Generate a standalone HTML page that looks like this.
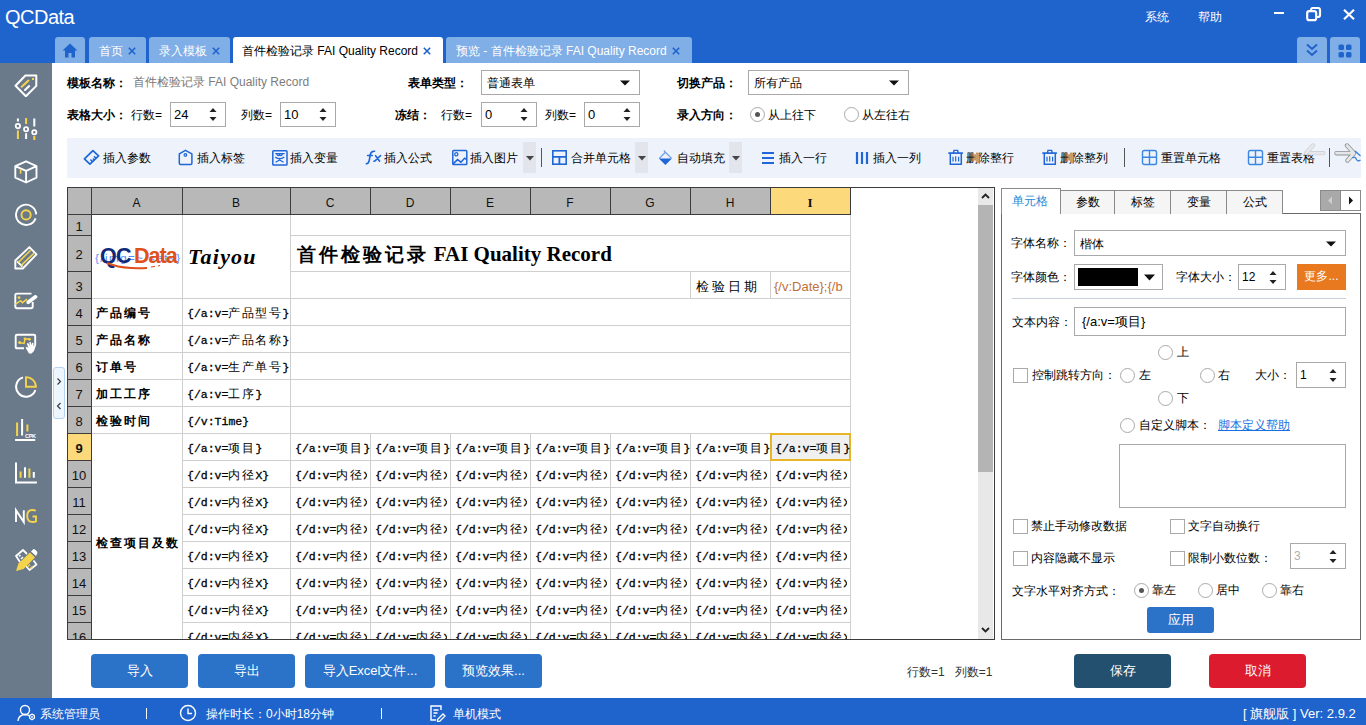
<!DOCTYPE html>
<html><head><meta charset="utf-8">
<style>
*{box-sizing:border-box;margin:0;padding:0}
html,body{width:1366px;height:725px;overflow:hidden;background:#fff;font-family:"Liberation Sans",sans-serif;font-size:12px;color:#000;position:relative}
.a{position:absolute}
.nw{white-space:nowrap}
.tab{top:37px;height:26px;background:#80aee6;border-radius:3px 3px 0 0;color:#fff;font-size:12px;line-height:28px;white-space:nowrap}
.tab.act{background:#fff;color:#000}
.lbl{font-weight:bold;font-size:12px;white-space:nowrap}
.t13{font-size:12px;white-space:nowrap}
.box{border:1px solid #a9a9a9;background:#fff}
.tb{top:138px;height:40px;line-height:40px;font-size:12px;white-space:nowrap}
.btn{color:#fff;font-size:13px;text-align:center;line-height:34px;border-radius:4px;top:654px;height:34px}
.gl{background:#d0d0d0}
.cell{font-size:11px;white-space:nowrap;overflow:hidden}
.cj{font-size:13px}
.rh{background:#b7b7b7;text-align:center;font-size:13px;color:#111}
.ch{background:#b7b7b7;text-align:center;font-size:12px;color:#111;line-height:27px}
.rp{font-size:12px;white-space:nowrap}
.chk{width:15px;height:15px;border:1px solid #a9a9a9;background:#fff}
.rad{width:15px;height:15px;border:1px solid #a9a9a9;border-radius:50%;background:#fff}
</style></head><body>

<div class="a" style="left:0;top:0;width:1366px;height:63px;background:#1f63cd"></div>
<div class="a nw" style="left:5px;top:6px;font-size:20px;color:#fff;letter-spacing:-0.5px">QCData</div>
<div class="a nw" style="left:1145px;top:9px;font-size:12px;color:#fff">系统</div>
<div class="a nw" style="left:1198px;top:9px;font-size:12px;color:#fff">帮助</div>
<div class="a" style="left:1274px;top:12px;width:10px;height:2px;background:#fff"></div>
<svg class="a" style="left:1306px;top:7px" width="16" height="15" viewBox="0 0 16 15"><rect x="1.2" y="4.2" width="9" height="9" rx="2" fill="none" stroke="#fff" stroke-width="2.2"/><path d="M5 3.5 V3 a2 2 0 0 1 2-2 h5 a2 2 0 0 1 2 2 v5 a2 2 0 0 1-2 2 h-1" fill="none" stroke="#fff" stroke-width="2.2"/></svg>
<svg class="a" style="left:1343px;top:9px" width="12" height="11" viewBox="0 0 12 11"><path d="M1 0.8 L11 10.2 M11 0.8 L1 10.2" stroke="#fff" stroke-width="2.2"/></svg>
<div class="tab a" style="left:55px;width:30px"><svg class="a" style="left:7px;top:6px" width="16" height="15" viewBox="0 0 16 15"><path d="M8 0.5 L15.5 7.5 H13 V14.5 H9.5 V10 H6.5 V14.5 H3 V7.5 H0.5 Z" fill="#1f63cd"/></svg></div>
<div class="tab a" style="left:89px;width:57px;padding-left:10px">首页<svg width="8" height="8" viewBox="0 0 8 8" style="margin-left:5px;vertical-align:0px"><path d="M0.8 0.8 L7.2 7.2 M7.2 0.8 L0.8 7.2" stroke="#1f63cd" stroke-width="1.6"/></svg></div>
<div class="tab a" style="left:149px;width:81px;padding-left:10px">录入模板<svg width="8" height="8" viewBox="0 0 8 8" style="margin-left:5px;vertical-align:0px"><path d="M0.8 0.8 L7.2 7.2 M7.2 0.8 L0.8 7.2" stroke="#1f63cd" stroke-width="1.6"/></svg></div>
<div class="tab a act" style="left:233px;width:210px;padding-left:9px;font-size:12px">首件检验记录 FAI Quality Record<svg width="8" height="8" viewBox="0 0 8 8" style="margin-left:5px;vertical-align:0px"><path d="M0.8 0.8 L7.2 7.2 M7.2 0.8 L0.8 7.2" stroke="#1f63cd" stroke-width="1.6"/></svg></div>
<div class="tab a" style="left:446px;width:246px;padding-left:10px;font-size:12px">预览 - 首件检验记录 FAI Quality Record<svg width="8" height="8" viewBox="0 0 8 8" style="margin-left:5px;vertical-align:0px"><path d="M0.8 0.8 L7.2 7.2 M7.2 0.8 L0.8 7.2" stroke="#1f63cd" stroke-width="1.6"/></svg></div>
<div class="tab a" style="left:1297px;width:30px;height:26px"><svg class="a" style="left:9px;top:6px" width="12" height="14" viewBox="0 0 12 14"><path d="M1 1.5 L6 6 L11 1.5 M1 7.5 L6 12 L11 7.5" fill="none" stroke="#1f63cd" stroke-width="2"/></svg></div>
<div class="tab a" style="left:1330px;width:30px;height:26px"><svg class="a" style="left:8px;top:7px" width="14" height="14" viewBox="0 0 14 14"><rect x="0.5" y="0.5" width="5.5" height="5.5" rx="1.5" fill="#1f63cd"/><rect x="8" y="0.5" width="5.5" height="5.5" rx="1.5" fill="#1f63cd"/><rect x="0.5" y="8" width="5.5" height="5.5" rx="1.5" fill="#1f63cd"/><rect x="8" y="8" width="5.5" height="5.5" rx="1.5" fill="#1f63cd"/></svg></div>
<div class="a" style="left:0;top:63px;width:52px;height:635px;background:#6b7a8b"></div>
<svg class="a" style="left:14px;top:73px" width="24" height="24" viewBox="0 0 24 24"><path d="M1.5 12.7 L11.4 2.5 H22.3 V12.9 L11.9 23.2 Z" stroke="#fff" stroke-width="2" fill="none" stroke-linecap="round" stroke-linejoin="round"/><path d="M7.7 13.8 L14.5 7.6" stroke="#f6d44a" stroke-width="2" fill="none" stroke-linecap="round" stroke-linejoin="round"/><path d="M11 17 L15.2 13.1" stroke="#fff" stroke-width="2" fill="none" stroke-linecap="round" stroke-linejoin="round"/><rect x="18" y="5" width="2" height="2" fill="#f6d44a"/></svg>
<svg class="a" style="left:14px;top:117px" width="24" height="24" viewBox="0 0 24 24"><path d="M3.9 1.5 V4.6 M12.1 16.2 V22 M20.3 1.5 V9.6" stroke="#fff" stroke-width="2"/><path d="M3.9 13.5 V22 M12.1 1 V7.1 M20.3 19 V23" stroke="#f6d44a" stroke-width="2"/><circle cx="3.9" cy="9.1" r="2.2" stroke="#fff" stroke-width="1.8" fill="none"/><circle cx="12.1" cy="12.2" r="2.1" stroke="#fff" stroke-width="1.8" fill="none"/><circle cx="20.3" cy="15.3" r="2.1" stroke="#fff" stroke-width="1.8" fill="none"/></svg>
<svg class="a" style="left:14px;top:160px" width="24" height="24" viewBox="0 0 24 24"><path d="M12.1 1.3 L22.5 6.1 V17.6 L12.1 22.5 L1.3 17.6 V6.1 Z M1.3 6.1 L12.1 10.8 L22.5 6.1 M12.1 10.8 V22.5" stroke="#fff" stroke-width="1.9" fill="none" stroke-linejoin="round"/><path d="M6.6 9.2 V13.7" stroke="#f6d44a" stroke-width="1.6"/></svg>
<svg class="a" style="left:14px;top:203px" width="24" height="24" viewBox="0 0 24 24"><path d="M22.2 11.4 A10.1 10.1 0 1 0 21.6 15.3" stroke="#fff" stroke-width="1.9" fill="none"/><circle cx="12.1" cy="11.9" r="4.6" stroke="#f6d44a" stroke-width="1.9" fill="none"/></svg>
<svg class="a" style="left:14px;top:246px" width="24" height="24" viewBox="0 0 24 24"><path d="M1.3 14.5 L15.4 1.1 L22.5 8.4 L8.8 22.5 H1.3 Z M3.1 15.4 L8.4 20.7" stroke="#fff" stroke-width="1.9" fill="none" stroke-linejoin="round"/><path d="M4.2 16.5 L16.7 4.2 M7.3 19.4 L19.8 7.3" stroke="#f6d44a" stroke-width="1.5"/></svg>
<svg class="a" style="left:14px;top:289px" width="24" height="24" viewBox="0 0 24 24"><path d="M17.5 4.6 H3 Q1.3 4.6 1.3 6.3 V17.5 Q1.3 19.2 3 19.2 H17 Q18.7 19.2 18.7 17.5 V13" stroke="#fff" stroke-width="1.9" fill="none"/><path d="M1.3 15.4 L6.6 11.7 L8.4 13.7 L13 10.1" stroke="#f6d44a" stroke-width="1.5" fill="none"/><circle cx="5" cy="8.6" r="1.4" fill="#f6d44a"/><path d="M14.2 13.3 L21.5 7.8" stroke="#fff" stroke-width="3.6" stroke-linecap="round"/></svg>
<svg class="a" style="left:14px;top:332px" width="24" height="24" viewBox="0 0 24 24"><path d="M10 16.3 H3 Q1.7 16.3 1.7 15 V4.1 Q1.7 2.8 3 2.8 H20 Q21.2 2.8 21.2 4.1 V13" stroke="#fff" stroke-width="1.9" fill="none"/><path d="M5.7 10.6 L10.1 11.4 L11 6.8 L15.4 7.3" stroke="#f6d44a" stroke-width="1.4" fill="none"/><circle cx="5.7" cy="10.6" r="1.5" fill="#f6d44a"/><circle cx="11" cy="6.8" r="1.4" fill="#f6d44a"/><circle cx="15.4" cy="7.3" r="1.4" fill="#f6d44a"/><path d="M15 21.5 L11.5 15.5 L13 14.8 L14.5 16 L12.8 11.5 L14.3 11 L15.8 14 L15.3 10.3 L16.8 10 L17.5 13.5 L18 10.8 L19.4 11 L19.5 14 L21 12.5 L22 13.3 L20 19 L17.5 21.5 Z" fill="#fff"/></svg>
<svg class="a" style="left:14px;top:375px" width="24" height="24" viewBox="0 0 24 24"><path d="M9 2.4 A9.9 9.9 0 1 0 21.4 15" stroke="#fff" stroke-width="2" fill="none"/><path d="M12 2.1 V11.8 H21.9 A9.8 9.8 0 0 0 12 2.1 Z" stroke="#f6d44a" stroke-width="1.9" fill="none" stroke-linejoin="miter"/></svg>
<svg class="a" style="left:14px;top:418px" width="24" height="24" viewBox="0 0 24 24"><path d="M3.1 4.6 V18 M13.4 6.6 V13.4" stroke="#f6d44a" stroke-width="2"/><path d="M8.1 1 V17.6 M1.1 22 H21.2" stroke="#fff" stroke-width="2"/><text x="11" y="19.5" font-size="5.5" fill="#fff" font-family="Liberation Sans" font-weight="bold" letter-spacing="-0.3">CPK</text></svg>
<svg class="a" style="left:14px;top:461px" width="24" height="24" viewBox="0 0 24 24"><path d="M2 1.5 V21.6 H22.9" stroke="#fff" stroke-width="2" fill="none"/><path d="M6.6 10.6 V16.7 M15.4 7.5 V16.7" stroke="#f6d44a" stroke-width="2"/><path d="M11 6.2 V16.7 M19.8 11 V16.7" stroke="#fff" stroke-width="2"/></svg>
<svg class="a" style="left:14px;top:500px" width="24" height="32" viewBox="0 0 24 32"><path d="M2 22 V10.2 L9.8 22 V10.2" stroke="#fff" stroke-width="1.9" fill="none"/><path d="M21.8 10.8 Q20.5 10 18.3 10 Q13.2 10 13.2 16 Q13.2 22 18.5 22 Q20.5 22 22 21.3 V16.5 H18.5" stroke="#f6d44a" stroke-width="1.9" fill="none"/></svg>
<svg class="a" style="left:14px;top:547px" width="24" height="24" viewBox="0 0 24 24"><path d="M6 15 L2 9 L9 3 L13 7" stroke="#fff" stroke-width="1.8" fill="none" stroke-linejoin="round"/><path d="M5 9.5 L6.5 8 M7 12 L9 10" stroke="#fff" stroke-width="1.5"/><path d="M19.5 13.5 L22.5 17.5 L15.5 23 L12 19" stroke="#fff" stroke-width="1.8" fill="none" stroke-linejoin="round"/><path d="M14 19.5 L16 17.5 M16.5 21.5 L18.5 19.5" stroke="#f6d44a" stroke-width="1.5"/><path d="M2 24 L4.5 16.5 L16 5.5 L21 10.5 L9.5 22 Z" fill="#f6d44a"/><path d="M4.5 16.5 L9.5 22" stroke="#f6d44a" stroke-width="0.8"/><path d="M17 4.5 L19 2.5 Q20 1.5 21.5 3 L23 4.5 Q24 6 23 7 L22 9 Z" fill="#fff"/></svg>
<div class="a" style="left:53px;top:367px;width:12px;height:52px;border:1px solid #b5d3f2;border-radius:3px;background:#eef6fd"></div>
<svg class="a" style="left:56px;top:377px" width="7" height="34" viewBox="0 0 7 34"><path d="M1.5 1.5 L4.5 4.5 L1.5 7.5 M4.5 26 L1.5 29 L4.5 32" stroke="#333" stroke-width="1.1" fill="none"/></svg>
<div class="a" style="left:0;top:698px;width:1366px;height:27px;background:#1f63cd"></div>
<div class="a lbl" style="left:67px;top:75px">模板名称：</div>
<div class="a t13" style="left:133px;top:74px;color:#777">首件检验记录 <span style="color:#7d7d7d">FAI Quality Record</span></div>
<div class="a lbl" style="left:67px;top:107px">表格大小：</div>
<div class="a t13" style="left:131px;top:107px">行数=</div>
<div class="a box" style="left:170px;top:102px;width:56px;height:25px"><div class="a nw" style="left:3px;top:0;line-height:23px;font-size:13px;color:#000">24</div><svg class="a" style="right:8px;top:4px" width="8" height="15" viewBox="0 0 8 15"><path d="M0.5 5 L4 1 L7.5 5 Z M0.5 10 L4 14 L7.5 10 Z" fill="#222"/></svg></div>
<div class="a t13" style="left:241px;top:107px">列数=</div>
<div class="a box" style="left:280px;top:102px;width:56px;height:25px"><div class="a nw" style="left:3px;top:0;line-height:23px;font-size:13px;color:#000">10</div><svg class="a" style="right:8px;top:4px" width="8" height="15" viewBox="0 0 8 15"><path d="M0.5 5 L4 1 L7.5 5 Z M0.5 10 L4 14 L7.5 10 Z" fill="#222"/></svg></div>
<div class="a lbl" style="left:408px;top:75px">表单类型：</div>
<div class="a box" style="left:481px;top:70px;width:159px;height:25px"><div class="a nw" style="left:5px;top:1px;line-height:23px;font-size:12px">普通表单</div><svg class="a" style="right:9px;top:9px" width="10" height="6" viewBox="0 0 10 6"><path d="M0 0.5 H10 L5 5.5 Z" fill="#111"/></svg></div>
<div class="a lbl" style="left:395px;top:107px">冻结：</div>
<div class="a t13" style="left:441px;top:107px">行数=</div>
<div class="a box" style="left:481px;top:102px;width:56px;height:25px"><div class="a nw" style="left:3px;top:0;line-height:23px;font-size:13px;color:#000">0</div><svg class="a" style="right:8px;top:4px" width="8" height="15" viewBox="0 0 8 15"><path d="M0.5 5 L4 1 L7.5 5 Z M0.5 10 L4 14 L7.5 10 Z" fill="#222"/></svg></div>
<div class="a t13" style="left:545px;top:107px">列数=</div>
<div class="a box" style="left:584px;top:102px;width:56px;height:25px"><div class="a nw" style="left:3px;top:0;line-height:23px;font-size:13px;color:#000">0</div><svg class="a" style="right:8px;top:4px" width="8" height="15" viewBox="0 0 8 15"><path d="M0.5 5 L4 1 L7.5 5 Z M0.5 10 L4 14 L7.5 10 Z" fill="#222"/></svg></div>
<div class="a lbl" style="left:677px;top:75px">切换产品：</div>
<div class="a box" style="left:748px;top:70px;width:161px;height:25px"><div class="a nw" style="left:5px;top:1px;line-height:23px;font-size:12px">所有产品</div><svg class="a" style="right:9px;top:9px" width="10" height="6" viewBox="0 0 10 6"><path d="M0 0.5 H10 L5 5.5 Z" fill="#111"/></svg></div>
<div class="a lbl" style="left:677px;top:107px">录入方向：</div>
<div class="a rad" style="left:750px;top:107px"><div class="a" style="left:4px;top:4px;width:5px;height:5px;border-radius:50%;background:#555"></div></div>
<div class="a t13" style="left:768px;top:107px">从上往下</div>
<div class="a rad" style="left:844px;top:107px"></div>
<div class="a t13" style="left:862px;top:107px">从左往右</div>
<div class="a" style="left:67px;top:138px;width:1294px;height:40px;background:#eef3fb"></div>
<svg class="a" style="left:83px;top:149px" width="17" height="17" viewBox="0 0 17 17"><path d="M9.9 1.6 L15.6 6.9 L6.9 15.2 L1.4 9.9 Z" fill="none" stroke="#1f66d8" stroke-width="1.7" stroke-linejoin="round"/><path d="M13.2 9.5 L11 7.2 M11.4 11.2 L9.9 9.6 M9.6 12.9 L7.4 10.6" stroke="#1f66d8" stroke-width="1.5"/></svg>
<div class="a tb" style="left:103px">插入参数</div>
<svg class="a" style="left:177px;top:148px" width="17" height="18" viewBox="0 0 17 18"><path d="M8.4 2.3 L14.9 5.9 V15.3 Q14.9 16.5 13.7 16.5 H3.5 Q2.3 16.5 2.3 15.3 V5.9 Z" fill="none" stroke="#1f66d8" stroke-width="1.5" stroke-linejoin="round"/><circle cx="8.4" cy="6.9" r="1.3" fill="none" stroke="#1f66d8" stroke-width="1.2"/></svg>
<div class="a tb" style="left:197px">插入标签</div>
<svg class="a" style="left:271px;top:149px" width="17" height="17" viewBox="0 0 17 17"><rect x="1.8" y="1.8" width="14.2" height="14.2" rx="0.8" fill="none" stroke="#1f66d8" stroke-width="1.5"/><path d="M4.3 4.6 H13.6 M5.8 4.8 Q6.2 6.6 7.4 6.6 Q8.6 6.6 8.6 5 Q8.6 6.6 9.8 6.6 Q11 6.6 11.4 4.8 M4.3 8 Q6 9.8 8.6 9.5 Q11.3 9.8 13.3 8 M4.6 13.2 L8.6 11 L12.6 13.2" fill="none" stroke="#1f66d8" stroke-width="1.3"/></svg>
<div class="a tb" style="left:290px">插入变量</div>
<svg class="a" style="left:364px;top:149px" width="18" height="16" viewBox="0 0 18 16"><path d="M2.3 14.8 Q4.6 15 5.3 11.2 L6.3 5.5 Q7 2 10.6 2.3" fill="none" stroke="#1f66d8" stroke-width="1.6" stroke-linecap="round"/><path d="M3.5 6.6 H8.3" stroke="#1f66d8" stroke-width="1.5" stroke-linecap="round"/><path d="M10 12.3 Q11.3 12 12.4 10.5 L16.5 6.6 M11.6 6.7 L15.6 12.2" fill="none" stroke="#1f66d8" stroke-width="1.6" stroke-linecap="round"/></svg>
<div class="a tb" style="left:384px">插入公式</div>
<svg class="a" style="left:451px;top:149px" width="17" height="17" viewBox="0 0 17 17"><rect x="1.8" y="1.6" width="14" height="14" rx="0.8" fill="none" stroke="#1f66d8" stroke-width="1.5"/><circle cx="5.3" cy="5.3" r="1.6" fill="none" stroke="#1f66d8" stroke-width="1.3"/><path d="M2 14.9 L6.6 10.6 L9.9 13.2 L13.6 9.3 L15.6 10.4" fill="none" stroke="#1f66d8" stroke-width="1.5"/></svg>
<div class="a tb" style="left:470px">插入图片</div>
<div class="a" style="left:523px;top:142px;width:13px;height:31px;background:#e2e6ec"></div><svg class="a" style="left:526px;top:156px" width="8" height="5" viewBox="0 0 8 5"><path d="M0 0 H8 L4 4.5Z" fill="#444"/></svg>
<div class="a" style="left:541px;top:148px;width:1px;height:19px;background:#555"></div>
<svg class="a" style="left:551px;top:149px" width="17" height="17" viewBox="0 0 17 17"><rect x="1.8" y="1.8" width="13.4" height="13.4" fill="none" stroke="#1f66d8" stroke-width="1.6"/><path d="M1.8 7.8 H15.2 M8.4 7.8 V15.2" stroke="#1f66d8" stroke-width="1.8"/></svg>
<div class="a tb" style="left:571px">合并单元格</div>
<div class="a" style="left:635px;top:142px;width:13px;height:31px;background:#e2e6ec"></div><svg class="a" style="left:638px;top:156px" width="8" height="5" viewBox="0 0 8 5"><path d="M0 0 H8 L4 4.5Z" fill="#444"/></svg>
<svg class="a" style="left:657px;top:148px" width="17" height="18" viewBox="0 0 17 18"><path d="M6.9 2.3 L8.4 4.3 L14.6 10.4 M8.4 4.3 L2.3 10.4" fill="none" stroke="#6fa0e6" stroke-width="1.3"/><path d="M1.9 10.4 H14.9 L8.4 16.9 Z" fill="#1f66d8"/></svg>
<div class="a tb" style="left:677px">自动填充</div>
<div class="a" style="left:729px;top:142px;width:13px;height:31px;background:#e2e6ec"></div><svg class="a" style="left:732px;top:156px" width="8" height="5" viewBox="0 0 8 5"><path d="M0 0 H8 L4 4.5Z" fill="#444"/></svg>
<svg class="a" style="left:761px;top:150px" width="14" height="16" viewBox="0 0 14 16"><path d="M1 3 H13 M1 8 H13 M1 13 H13" stroke="#1f66d8" stroke-width="2.2"/></svg>
<div class="a tb" style="left:779px">插入一行</div>
<svg class="a" style="left:855px;top:150px" width="14" height="16" viewBox="0 0 14 16"><path d="M2 2 V14 M7 2 V14 M12 2 V14" stroke="#1f66d8" stroke-width="2.2"/></svg>
<div class="a tb" style="left:873px">插入一列</div>
<svg class="a" style="left:947px;top:148px" width="17" height="18" viewBox="0 0 17 18"><path d="M1.3 5.1 H15.9" stroke="#1f66d8" stroke-width="1.7"/><path d="M6.4 5 L7 2.4 H10.6 L11.3 5" stroke="#1f66d8" stroke-width="1.4" fill="none"/><path d="M3.3 5.6 V16.3 H14.3 V5.6" stroke="#1f66d8" stroke-width="1.5" fill="none"/><path d="M6 8.8 V13.4 M8.7 8.2 V13.4 M11.6 8.8 V13.4" stroke="#1f66d8" stroke-width="1.2"/></svg>
<div class="a tb" style="left:966px">删除整行</div>
<svg class="a" style="left:1041px;top:148px" width="17" height="18" viewBox="0 0 17 18"><path d="M1.3 5.1 H15.9" stroke="#1f66d8" stroke-width="1.7"/><path d="M6.4 5 L7 2.4 H10.6 L11.3 5" stroke="#1f66d8" stroke-width="1.4" fill="none"/><path d="M3.3 5.6 V16.3 H14.3 V5.6" stroke="#1f66d8" stroke-width="1.5" fill="none"/><path d="M6 8.8 V13.4 M8.7 8.2 V13.4 M11.6 8.8 V13.4" stroke="#1f66d8" stroke-width="1.2"/></svg>
<div class="a tb" style="left:1060px">删除整列</div>
<div class="a" style="left:1124px;top:148px;width:1px;height:19px;background:#555"></div>
<svg class="a" style="left:1141px;top:149px" width="17" height="17" viewBox="0 0 17 17"><rect x="1.5" y="1.5" width="14" height="14" rx="1.8" fill="none" stroke="#3a86e0" stroke-width="1.4"/><path d="M8.5 1.5 V15.5 M1.5 8.2 H15.5" stroke="#3a86e0" stroke-width="1.4"/></svg>
<div class="a tb" style="left:1161px">重置单元格</div>
<svg class="a" style="left:1247px;top:149px" width="17" height="17" viewBox="0 0 17 17"><rect x="1.5" y="1.5" width="14" height="14" rx="1.8" fill="none" stroke="#3a86e0" stroke-width="1.4"/><path d="M8.5 1.5 V15.5 M1.5 8.2 H15.5" stroke="#3a86e0" stroke-width="1.4"/></svg>
<div class="a tb" style="left:1267px">重置表格</div>
<svg class="a" style="left:1303px;top:143px" width="24" height="18" viewBox="0 0 24 18"><path d="M20.5 10.2 H7 M10 2.5 L3 10" stroke="#cfd3d8" stroke-width="4.2" fill="none" stroke-linecap="round"/><path d="M20.5 10.2 H7 M10 2.5 L3 10" stroke="#e6e8eb" stroke-width="2.6" fill="none" stroke-linecap="round"/></svg>
<div class="a" style="left:1329px;top:148px;width:1px;height:19px;background:#555"></div>
<svg class="a" style="left:1333px;top:143px" width="28" height="22" viewBox="0 0 28 22"><path d="M3.5 10.2 H20 M14 2.5 L21 10.2 L14.5 17.5" stroke="#8e9296" stroke-width="4.4" fill="none" stroke-linecap="round" stroke-linejoin="round"/><path d="M3.5 10.2 H20 M14 2.5 L21 10.2 L14.5 17.5" stroke="#e4e6e8" stroke-width="2.8" fill="none" stroke-linecap="round" stroke-linejoin="round"/><path d="M22 8 Q25.5 11 27.5 13 M19.5 15 Q22 13 23.5 16.5 Q25 19 27.5 17" stroke="#2c7be0" stroke-width="1.2" fill="none"/></svg>
<div class="a" style="left:67px;top:187px;width:928px;height:453px;border:1px solid #3c3c3c;overflow:hidden;background:#fff">
<div class="a" style="left:-1px;top:-1px;width:783px;height:27px;background:#b8b8b8"></div>
<div class="a" style="left:702px;top:-1px;width:80px;height:27px;background:#fcd97b"></div>
<div class="a" style="left:-1px;top:26px;width:24px;height:460px;background:#b8b8b8"></div>
<div class="a" style="left:-1px;top:245px;width:24px;height:27px;background:#fcd97b"></div>
<div class="a" style="left:223px;top:47px;width:559px;height:1px;background:#cfcfcf"></div>
<div class="a" style="left:223px;top:83px;width:559px;height:1px;background:#cfcfcf"></div>
<div class="a" style="left:23px;top:110px;width:759px;height:1px;background:#cfcfcf"></div>
<div class="a" style="left:23px;top:137px;width:759px;height:1px;background:#cfcfcf"></div>
<div class="a" style="left:23px;top:164px;width:759px;height:1px;background:#cfcfcf"></div>
<div class="a" style="left:23px;top:191px;width:759px;height:1px;background:#cfcfcf"></div>
<div class="a" style="left:23px;top:218px;width:759px;height:1px;background:#cfcfcf"></div>
<div class="a" style="left:23px;top:245px;width:759px;height:1px;background:#cfcfcf"></div>
<div class="a" style="left:115px;top:272px;width:667px;height:1px;background:#cfcfcf"></div>
<div class="a" style="left:115px;top:299px;width:667px;height:1px;background:#cfcfcf"></div>
<div class="a" style="left:115px;top:326px;width:667px;height:1px;background:#cfcfcf"></div>
<div class="a" style="left:115px;top:353px;width:667px;height:1px;background:#cfcfcf"></div>
<div class="a" style="left:115px;top:380px;width:667px;height:1px;background:#cfcfcf"></div>
<div class="a" style="left:115px;top:407px;width:667px;height:1px;background:#cfcfcf"></div>
<div class="a" style="left:115px;top:434px;width:667px;height:1px;background:#cfcfcf"></div>
<div class="a" style="left:115px;top:461px;width:667px;height:1px;background:#cfcfcf"></div>
<div class="a" style="left:114px;top:26px;width:1px;height:460px;background:#cfcfcf"></div>
<div class="a" style="left:222px;top:26px;width:1px;height:460px;background:#cfcfcf"></div>
<div class="a" style="left:302px;top:245px;width:1px;height:240px;background:#cfcfcf"></div>
<div class="a" style="left:382px;top:245px;width:1px;height:240px;background:#cfcfcf"></div>
<div class="a" style="left:462px;top:245px;width:1px;height:240px;background:#cfcfcf"></div>
<div class="a" style="left:542px;top:245px;width:1px;height:240px;background:#cfcfcf"></div>
<div class="a" style="left:622px;top:245px;width:1px;height:240px;background:#cfcfcf"></div>
<div class="a" style="left:622px;top:83px;width:1px;height:27px;background:#cfcfcf"></div>
<div class="a" style="left:702px;top:83px;width:1px;height:27px;background:#cfcfcf"></div>
<div class="a" style="left:702px;top:245px;width:1px;height:240px;background:#cfcfcf"></div>
<div class="a" style="left:782px;top:26px;width:1px;height:460px;background:#cfcfcf"></div>
<div class="a" style="left:-1px;top:26px;width:784px;height:1px;background:#3c3c3c"></div>
<div class="a" style="left:23px;top:-1px;width:1px;height:27px;background:#3c3c3c"></div>
<div class="a" style="left:114px;top:-1px;width:1px;height:27px;background:#3c3c3c"></div>
<div class="a" style="left:222px;top:-1px;width:1px;height:27px;background:#3c3c3c"></div>
<div class="a" style="left:302px;top:-1px;width:1px;height:27px;background:#3c3c3c"></div>
<div class="a" style="left:382px;top:-1px;width:1px;height:27px;background:#3c3c3c"></div>
<div class="a" style="left:462px;top:-1px;width:1px;height:27px;background:#3c3c3c"></div>
<div class="a" style="left:542px;top:-1px;width:1px;height:27px;background:#3c3c3c"></div>
<div class="a" style="left:622px;top:-1px;width:1px;height:27px;background:#3c3c3c"></div>
<div class="a" style="left:702px;top:-1px;width:1px;height:27px;background:#3c3c3c"></div>
<div class="a" style="left:782px;top:-1px;width:1px;height:27px;background:#3c3c3c"></div>
<div class="a" style="left:23px;top:26px;width:1px;height:460px;background:#3c3c3c"></div>
<div class="a" style="left:-1px;top:26px;width:24px;height:1px;background:#3c3c3c"></div>
<div class="a" style="left:-1px;top:47px;width:24px;height:1px;background:#3c3c3c"></div>
<div class="a" style="left:-1px;top:83px;width:24px;height:1px;background:#3c3c3c"></div>
<div class="a" style="left:-1px;top:110px;width:24px;height:1px;background:#3c3c3c"></div>
<div class="a" style="left:-1px;top:137px;width:24px;height:1px;background:#3c3c3c"></div>
<div class="a" style="left:-1px;top:164px;width:24px;height:1px;background:#3c3c3c"></div>
<div class="a" style="left:-1px;top:191px;width:24px;height:1px;background:#3c3c3c"></div>
<div class="a" style="left:-1px;top:218px;width:24px;height:1px;background:#3c3c3c"></div>
<div class="a" style="left:-1px;top:245px;width:24px;height:1px;background:#3c3c3c"></div>
<div class="a" style="left:-1px;top:272px;width:24px;height:1px;background:#3c3c3c"></div>
<div class="a" style="left:-1px;top:299px;width:24px;height:1px;background:#3c3c3c"></div>
<div class="a" style="left:-1px;top:326px;width:24px;height:1px;background:#3c3c3c"></div>
<div class="a" style="left:-1px;top:353px;width:24px;height:1px;background:#3c3c3c"></div>
<div class="a" style="left:-1px;top:380px;width:24px;height:1px;background:#3c3c3c"></div>
<div class="a" style="left:-1px;top:407px;width:24px;height:1px;background:#3c3c3c"></div>
<div class="a" style="left:-1px;top:434px;width:24px;height:1px;background:#3c3c3c"></div>
<div class="a" style="left:-1px;top:461px;width:24px;height:1px;background:#3c3c3c"></div>
<div class="a" style="left:23px;top:2px;width:91px;height:27px;line-height:27px;text-align:center;font-size:12px;font-weight:normal;color:#111">A</div>
<div class="a" style="left:114px;top:2px;width:108px;height:27px;line-height:27px;text-align:center;font-size:12px;font-weight:normal;color:#111">B</div>
<div class="a" style="left:222px;top:2px;width:80px;height:27px;line-height:27px;text-align:center;font-size:12px;font-weight:normal;color:#111">C</div>
<div class="a" style="left:302px;top:2px;width:80px;height:27px;line-height:27px;text-align:center;font-size:12px;font-weight:normal;color:#111">D</div>
<div class="a" style="left:382px;top:2px;width:80px;height:27px;line-height:27px;text-align:center;font-size:12px;font-weight:normal;color:#111">E</div>
<div class="a" style="left:462px;top:2px;width:80px;height:27px;line-height:27px;text-align:center;font-size:12px;font-weight:normal;color:#111">F</div>
<div class="a" style="left:542px;top:2px;width:80px;height:27px;line-height:27px;text-align:center;font-size:12px;font-weight:normal;color:#111">G</div>
<div class="a" style="left:622px;top:2px;width:80px;height:27px;line-height:27px;text-align:center;font-size:12px;font-weight:normal;color:#111">H</div>
<div class="a" style="left:702px;top:2px;width:80px;height:27px;line-height:27px;text-align:center;font-size:12px;font-weight:bold;font-family:Liberation Serif;font-size:13px;margin-top:-1px;color:#111">I</div>
<div class="a" style="left:-1px;top:28px;width:24px;height:21px;line-height:21px;text-align:center;font-size:13px;font-weight:normal;color:#111">1</div>
<div class="a" style="left:-1px;top:49px;width:24px;height:36px;line-height:36px;text-align:center;font-size:13px;font-weight:normal;color:#111">2</div>
<div class="a" style="left:-1px;top:85px;width:24px;height:27px;line-height:27px;text-align:center;font-size:13px;font-weight:normal;color:#111">3</div>
<div class="a" style="left:-1px;top:112px;width:24px;height:27px;line-height:27px;text-align:center;font-size:13px;font-weight:normal;color:#111">4</div>
<div class="a" style="left:-1px;top:139px;width:24px;height:27px;line-height:27px;text-align:center;font-size:13px;font-weight:normal;color:#111">5</div>
<div class="a" style="left:-1px;top:166px;width:24px;height:27px;line-height:27px;text-align:center;font-size:13px;font-weight:normal;color:#111">6</div>
<div class="a" style="left:-1px;top:193px;width:24px;height:27px;line-height:27px;text-align:center;font-size:13px;font-weight:normal;color:#111">7</div>
<div class="a" style="left:-1px;top:220px;width:24px;height:27px;line-height:27px;text-align:center;font-size:13px;font-weight:normal;color:#111">8</div>
<div class="a" style="left:-1px;top:247px;width:24px;height:27px;line-height:27px;text-align:center;font-size:13px;font-weight:bold;color:#111">9</div>
<div class="a" style="left:-1px;top:274px;width:24px;height:27px;line-height:27px;text-align:center;font-size:13px;font-weight:normal;color:#111">10</div>
<div class="a" style="left:-1px;top:301px;width:24px;height:27px;line-height:27px;text-align:center;font-size:13px;font-weight:normal;color:#111">11</div>
<div class="a" style="left:-1px;top:328px;width:24px;height:27px;line-height:27px;text-align:center;font-size:13px;font-weight:normal;color:#111">12</div>
<div class="a" style="left:-1px;top:355px;width:24px;height:27px;line-height:27px;text-align:center;font-size:13px;font-weight:normal;color:#111">13</div>
<div class="a" style="left:-1px;top:382px;width:24px;height:27px;line-height:27px;text-align:center;font-size:13px;font-weight:normal;color:#111">14</div>
<div class="a" style="left:-1px;top:409px;width:24px;height:27px;line-height:27px;text-align:center;font-size:13px;font-weight:normal;color:#111">15</div>
<div class="a" style="left:-1px;top:436px;width:24px;height:27px;line-height:27px;text-align:center;font-size:13px;font-weight:normal;color:#111">16</div>
<div class="a" style="left:702px;top:245px;width:81px;height:28px;border:2px solid #e8b526;background:#f0f0f0"></div>
<svg class="a" style="left:27px;top:54px" width="86" height="30" viewBox="0 0 86 30">
<text x="0" y="19.5" font-family="Liberation Sans" font-size="11.5" fill="#3d7af5" opacity="0.85" textLength="85" lengthAdjust="spacing">{/img=~/sets}</text>
<text x="5" y="20.5" font-family="Liberation Sans" font-weight="bold" font-size="21.5" fill="#0f2878" letter-spacing="-0.8">QC</text>
<text x="39" y="20.5" font-family="Liberation Sans" font-weight="bold" font-size="21.5" fill="#e0501a" letter-spacing="-1">Data</text>
<path d="M12 21 L18 23 Q30 27 52 26" stroke="#e0501a" stroke-width="2" fill="none"/><path d="M56 25 L60 24.5 M63 24 L65 23.5" stroke="#e0501a" stroke-width="1.2"/>
</svg>
<div class="a nw" style="left:120px;top:55px;font-family:Liberation Serif;font-style:italic;font-weight:bold;font-size:22px;line-height:28px;letter-spacing:1.2px">Taiyou</div>
<div class="a nw" style="left:229px;top:54px;font-family:Liberation Serif;font-weight:bold;font-size:19px;line-height:25px"><span style="letter-spacing:3px">首件检验记录</span> <span style="font-size:21px">FAI Quality Record</span></div>
<div class="a nw" style="left:628px;top:90px;font-size:13px;line-height:18px;letter-spacing:3px">检验日期</div>
<div class="a nw" style="left:706px;top:90px;width:76px;overflow:hidden;font-size:13px;line-height:18px;color:#c0703a">{/v:Date};{/b</div>
<div class="a nw" style="left:28px;top:112px;line-height:27px;font-size:12px;font-weight:bold;letter-spacing:2px">产品编号</div>
<div class="a nw" style="left:119px;top:112px;height:27px;line-height:27px;font-family:Liberation Mono;font-size:11.5px;-webkit-text-stroke:0.3px #000;font-weight:normal">{/a:v=<span style="font-size:12px;letter-spacing:1.5px;-webkit-text-stroke:0">产</span><span style="font-size:12px;letter-spacing:1.5px;-webkit-text-stroke:0">品</span><span style="font-size:12px;letter-spacing:1.5px;-webkit-text-stroke:0">型</span><span style="font-size:12px;letter-spacing:1.5px;-webkit-text-stroke:0">号</span>}</div>
<div class="a nw" style="left:28px;top:139px;line-height:27px;font-size:12px;font-weight:bold;letter-spacing:2px">产品名称</div>
<div class="a nw" style="left:119px;top:139px;height:27px;line-height:27px;font-family:Liberation Mono;font-size:11.5px;-webkit-text-stroke:0.3px #000;font-weight:normal">{/a:v=<span style="font-size:12px;letter-spacing:1.5px;-webkit-text-stroke:0">产</span><span style="font-size:12px;letter-spacing:1.5px;-webkit-text-stroke:0">品</span><span style="font-size:12px;letter-spacing:1.5px;-webkit-text-stroke:0">名</span><span style="font-size:12px;letter-spacing:1.5px;-webkit-text-stroke:0">称</span>}</div>
<div class="a nw" style="left:28px;top:166px;line-height:27px;font-size:12px;font-weight:bold;letter-spacing:2px">订单号</div>
<div class="a nw" style="left:119px;top:166px;height:27px;line-height:27px;font-family:Liberation Mono;font-size:11.5px;-webkit-text-stroke:0.3px #000;font-weight:normal">{/a:v=<span style="font-size:12px;letter-spacing:1.5px;-webkit-text-stroke:0">生</span><span style="font-size:12px;letter-spacing:1.5px;-webkit-text-stroke:0">产</span><span style="font-size:12px;letter-spacing:1.5px;-webkit-text-stroke:0">单</span><span style="font-size:12px;letter-spacing:1.5px;-webkit-text-stroke:0">号</span>}</div>
<div class="a nw" style="left:28px;top:193px;line-height:27px;font-size:12px;font-weight:bold;letter-spacing:2px">加工工序</div>
<div class="a nw" style="left:119px;top:193px;height:27px;line-height:27px;font-family:Liberation Mono;font-size:11.5px;-webkit-text-stroke:0.3px #000;font-weight:normal">{/a:v=<span style="font-size:12px;letter-spacing:1.5px;-webkit-text-stroke:0">工</span><span style="font-size:12px;letter-spacing:1.5px;-webkit-text-stroke:0">序</span>}</div>
<div class="a nw" style="left:28px;top:220px;line-height:27px;font-size:12px;font-weight:bold;letter-spacing:2px">检验时间</div>
<div class="a nw" style="left:119px;top:220px;height:27px;line-height:27px;font-family:Liberation Mono;font-size:11.5px;-webkit-text-stroke:0.3px #000;font-weight:normal">{/v:Time}</div>
<div class="a nw" style="left:28px;top:342px;line-height:27px;font-size:12px;font-weight:bold;letter-spacing:2px">检查项目及数</div>
<div class="a nw" style="left:119px;top:247px;height:27px;line-height:27px;font-family:Liberation Mono;font-size:11.5px;-webkit-text-stroke:0.3px #000;font-weight:normal">{/a:v=<span style="font-size:12px;letter-spacing:1.5px;-webkit-text-stroke:0">项</span><span style="font-size:12px;letter-spacing:1.5px;-webkit-text-stroke:0">目</span>}</div>
<div class="a nw" style="left:227px;top:247px;width:75px;overflow:hidden;height:25px;line-height:27px;font-family:Liberation Mono;font-size:11.5px;-webkit-text-stroke:0.3px #000">{/a:v=<span style="font-size:12px;letter-spacing:1.5px;-webkit-text-stroke:0">项</span><span style="font-size:12px;letter-spacing:1.5px;-webkit-text-stroke:0">目</span>}</div>
<div class="a nw" style="left:307px;top:247px;width:75px;overflow:hidden;height:25px;line-height:27px;font-family:Liberation Mono;font-size:11.5px;-webkit-text-stroke:0.3px #000">{/a:v=<span style="font-size:12px;letter-spacing:1.5px;-webkit-text-stroke:0">项</span><span style="font-size:12px;letter-spacing:1.5px;-webkit-text-stroke:0">目</span>}</div>
<div class="a nw" style="left:387px;top:247px;width:75px;overflow:hidden;height:25px;line-height:27px;font-family:Liberation Mono;font-size:11.5px;-webkit-text-stroke:0.3px #000">{/a:v=<span style="font-size:12px;letter-spacing:1.5px;-webkit-text-stroke:0">项</span><span style="font-size:12px;letter-spacing:1.5px;-webkit-text-stroke:0">目</span>}</div>
<div class="a nw" style="left:467px;top:247px;width:75px;overflow:hidden;height:25px;line-height:27px;font-family:Liberation Mono;font-size:11.5px;-webkit-text-stroke:0.3px #000">{/a:v=<span style="font-size:12px;letter-spacing:1.5px;-webkit-text-stroke:0">项</span><span style="font-size:12px;letter-spacing:1.5px;-webkit-text-stroke:0">目</span>}</div>
<div class="a nw" style="left:547px;top:247px;width:75px;overflow:hidden;height:25px;line-height:27px;font-family:Liberation Mono;font-size:11.5px;-webkit-text-stroke:0.3px #000">{/a:v=<span style="font-size:12px;letter-spacing:1.5px;-webkit-text-stroke:0">项</span><span style="font-size:12px;letter-spacing:1.5px;-webkit-text-stroke:0">目</span>}</div>
<div class="a nw" style="left:627px;top:247px;width:75px;overflow:hidden;height:25px;line-height:27px;font-family:Liberation Mono;font-size:11.5px;-webkit-text-stroke:0.3px #000">{/a:v=<span style="font-size:12px;letter-spacing:1.5px;-webkit-text-stroke:0">项</span><span style="font-size:12px;letter-spacing:1.5px;-webkit-text-stroke:0">目</span>}</div>
<div class="a nw" style="left:707px;top:247px;width:75px;overflow:hidden;height:25px;line-height:27px;font-family:Liberation Mono;font-size:11.5px;-webkit-text-stroke:0.3px #000">{/a:v=<span style="font-size:12px;letter-spacing:1.5px;-webkit-text-stroke:0">项</span><span style="font-size:12px;letter-spacing:1.5px;-webkit-text-stroke:0">目</span>}</div>
<div class="a nw" style="left:119px;top:274px;height:27px;line-height:27px;font-family:Liberation Mono;font-size:11.5px;-webkit-text-stroke:0.3px #000;font-weight:normal">{/d:v=<span style="font-size:12px;letter-spacing:1.5px;-webkit-text-stroke:0">内</span><span style="font-size:12px;letter-spacing:1.5px;-webkit-text-stroke:0">径</span>X}</div>
<div class="a nw" style="left:227px;top:274px;width:72px;overflow:hidden;height:25px;line-height:27px;font-family:Liberation Mono;font-size:11.5px;-webkit-text-stroke:0.3px #000">{/d:v=<span style="font-size:12px;letter-spacing:1.5px;-webkit-text-stroke:0">内</span><span style="font-size:12px;letter-spacing:1.5px;-webkit-text-stroke:0">径</span>X}</div>
<div class="a nw" style="left:307px;top:274px;width:72px;overflow:hidden;height:25px;line-height:27px;font-family:Liberation Mono;font-size:11.5px;-webkit-text-stroke:0.3px #000">{/d:v=<span style="font-size:12px;letter-spacing:1.5px;-webkit-text-stroke:0">内</span><span style="font-size:12px;letter-spacing:1.5px;-webkit-text-stroke:0">径</span>X}</div>
<div class="a nw" style="left:387px;top:274px;width:72px;overflow:hidden;height:25px;line-height:27px;font-family:Liberation Mono;font-size:11.5px;-webkit-text-stroke:0.3px #000">{/d:v=<span style="font-size:12px;letter-spacing:1.5px;-webkit-text-stroke:0">内</span><span style="font-size:12px;letter-spacing:1.5px;-webkit-text-stroke:0">径</span>X}</div>
<div class="a nw" style="left:467px;top:274px;width:72px;overflow:hidden;height:25px;line-height:27px;font-family:Liberation Mono;font-size:11.5px;-webkit-text-stroke:0.3px #000">{/d:v=<span style="font-size:12px;letter-spacing:1.5px;-webkit-text-stroke:0">内</span><span style="font-size:12px;letter-spacing:1.5px;-webkit-text-stroke:0">径</span>X}</div>
<div class="a nw" style="left:547px;top:274px;width:72px;overflow:hidden;height:25px;line-height:27px;font-family:Liberation Mono;font-size:11.5px;-webkit-text-stroke:0.3px #000">{/d:v=<span style="font-size:12px;letter-spacing:1.5px;-webkit-text-stroke:0">内</span><span style="font-size:12px;letter-spacing:1.5px;-webkit-text-stroke:0">径</span>X}</div>
<div class="a nw" style="left:627px;top:274px;width:72px;overflow:hidden;height:25px;line-height:27px;font-family:Liberation Mono;font-size:11.5px;-webkit-text-stroke:0.3px #000">{/d:v=<span style="font-size:12px;letter-spacing:1.5px;-webkit-text-stroke:0">内</span><span style="font-size:12px;letter-spacing:1.5px;-webkit-text-stroke:0">径</span>X}</div>
<div class="a nw" style="left:707px;top:274px;width:72px;overflow:hidden;height:25px;line-height:27px;font-family:Liberation Mono;font-size:11.5px;-webkit-text-stroke:0.3px #000">{/d:v=<span style="font-size:12px;letter-spacing:1.5px;-webkit-text-stroke:0">内</span><span style="font-size:12px;letter-spacing:1.5px;-webkit-text-stroke:0">径</span>X}</div>
<div class="a nw" style="left:119px;top:301px;height:27px;line-height:27px;font-family:Liberation Mono;font-size:11.5px;-webkit-text-stroke:0.3px #000;font-weight:normal">{/d:v=<span style="font-size:12px;letter-spacing:1.5px;-webkit-text-stroke:0">内</span><span style="font-size:12px;letter-spacing:1.5px;-webkit-text-stroke:0">径</span>X}</div>
<div class="a nw" style="left:227px;top:301px;width:72px;overflow:hidden;height:25px;line-height:27px;font-family:Liberation Mono;font-size:11.5px;-webkit-text-stroke:0.3px #000">{/d:v=<span style="font-size:12px;letter-spacing:1.5px;-webkit-text-stroke:0">内</span><span style="font-size:12px;letter-spacing:1.5px;-webkit-text-stroke:0">径</span>X}</div>
<div class="a nw" style="left:307px;top:301px;width:72px;overflow:hidden;height:25px;line-height:27px;font-family:Liberation Mono;font-size:11.5px;-webkit-text-stroke:0.3px #000">{/d:v=<span style="font-size:12px;letter-spacing:1.5px;-webkit-text-stroke:0">内</span><span style="font-size:12px;letter-spacing:1.5px;-webkit-text-stroke:0">径</span>X}</div>
<div class="a nw" style="left:387px;top:301px;width:72px;overflow:hidden;height:25px;line-height:27px;font-family:Liberation Mono;font-size:11.5px;-webkit-text-stroke:0.3px #000">{/d:v=<span style="font-size:12px;letter-spacing:1.5px;-webkit-text-stroke:0">内</span><span style="font-size:12px;letter-spacing:1.5px;-webkit-text-stroke:0">径</span>X}</div>
<div class="a nw" style="left:467px;top:301px;width:72px;overflow:hidden;height:25px;line-height:27px;font-family:Liberation Mono;font-size:11.5px;-webkit-text-stroke:0.3px #000">{/d:v=<span style="font-size:12px;letter-spacing:1.5px;-webkit-text-stroke:0">内</span><span style="font-size:12px;letter-spacing:1.5px;-webkit-text-stroke:0">径</span>X}</div>
<div class="a nw" style="left:547px;top:301px;width:72px;overflow:hidden;height:25px;line-height:27px;font-family:Liberation Mono;font-size:11.5px;-webkit-text-stroke:0.3px #000">{/d:v=<span style="font-size:12px;letter-spacing:1.5px;-webkit-text-stroke:0">内</span><span style="font-size:12px;letter-spacing:1.5px;-webkit-text-stroke:0">径</span>X}</div>
<div class="a nw" style="left:627px;top:301px;width:72px;overflow:hidden;height:25px;line-height:27px;font-family:Liberation Mono;font-size:11.5px;-webkit-text-stroke:0.3px #000">{/d:v=<span style="font-size:12px;letter-spacing:1.5px;-webkit-text-stroke:0">内</span><span style="font-size:12px;letter-spacing:1.5px;-webkit-text-stroke:0">径</span>X}</div>
<div class="a nw" style="left:707px;top:301px;width:72px;overflow:hidden;height:25px;line-height:27px;font-family:Liberation Mono;font-size:11.5px;-webkit-text-stroke:0.3px #000">{/d:v=<span style="font-size:12px;letter-spacing:1.5px;-webkit-text-stroke:0">内</span><span style="font-size:12px;letter-spacing:1.5px;-webkit-text-stroke:0">径</span>X}</div>
<div class="a nw" style="left:119px;top:328px;height:27px;line-height:27px;font-family:Liberation Mono;font-size:11.5px;-webkit-text-stroke:0.3px #000;font-weight:normal">{/d:v=<span style="font-size:12px;letter-spacing:1.5px;-webkit-text-stroke:0">内</span><span style="font-size:12px;letter-spacing:1.5px;-webkit-text-stroke:0">径</span>X}</div>
<div class="a nw" style="left:227px;top:328px;width:72px;overflow:hidden;height:25px;line-height:27px;font-family:Liberation Mono;font-size:11.5px;-webkit-text-stroke:0.3px #000">{/d:v=<span style="font-size:12px;letter-spacing:1.5px;-webkit-text-stroke:0">内</span><span style="font-size:12px;letter-spacing:1.5px;-webkit-text-stroke:0">径</span>X}</div>
<div class="a nw" style="left:307px;top:328px;width:72px;overflow:hidden;height:25px;line-height:27px;font-family:Liberation Mono;font-size:11.5px;-webkit-text-stroke:0.3px #000">{/d:v=<span style="font-size:12px;letter-spacing:1.5px;-webkit-text-stroke:0">内</span><span style="font-size:12px;letter-spacing:1.5px;-webkit-text-stroke:0">径</span>X}</div>
<div class="a nw" style="left:387px;top:328px;width:72px;overflow:hidden;height:25px;line-height:27px;font-family:Liberation Mono;font-size:11.5px;-webkit-text-stroke:0.3px #000">{/d:v=<span style="font-size:12px;letter-spacing:1.5px;-webkit-text-stroke:0">内</span><span style="font-size:12px;letter-spacing:1.5px;-webkit-text-stroke:0">径</span>X}</div>
<div class="a nw" style="left:467px;top:328px;width:72px;overflow:hidden;height:25px;line-height:27px;font-family:Liberation Mono;font-size:11.5px;-webkit-text-stroke:0.3px #000">{/d:v=<span style="font-size:12px;letter-spacing:1.5px;-webkit-text-stroke:0">内</span><span style="font-size:12px;letter-spacing:1.5px;-webkit-text-stroke:0">径</span>X}</div>
<div class="a nw" style="left:547px;top:328px;width:72px;overflow:hidden;height:25px;line-height:27px;font-family:Liberation Mono;font-size:11.5px;-webkit-text-stroke:0.3px #000">{/d:v=<span style="font-size:12px;letter-spacing:1.5px;-webkit-text-stroke:0">内</span><span style="font-size:12px;letter-spacing:1.5px;-webkit-text-stroke:0">径</span>X}</div>
<div class="a nw" style="left:627px;top:328px;width:72px;overflow:hidden;height:25px;line-height:27px;font-family:Liberation Mono;font-size:11.5px;-webkit-text-stroke:0.3px #000">{/d:v=<span style="font-size:12px;letter-spacing:1.5px;-webkit-text-stroke:0">内</span><span style="font-size:12px;letter-spacing:1.5px;-webkit-text-stroke:0">径</span>X}</div>
<div class="a nw" style="left:707px;top:328px;width:72px;overflow:hidden;height:25px;line-height:27px;font-family:Liberation Mono;font-size:11.5px;-webkit-text-stroke:0.3px #000">{/d:v=<span style="font-size:12px;letter-spacing:1.5px;-webkit-text-stroke:0">内</span><span style="font-size:12px;letter-spacing:1.5px;-webkit-text-stroke:0">径</span>X}</div>
<div class="a nw" style="left:119px;top:355px;height:27px;line-height:27px;font-family:Liberation Mono;font-size:11.5px;-webkit-text-stroke:0.3px #000;font-weight:normal">{/d:v=<span style="font-size:12px;letter-spacing:1.5px;-webkit-text-stroke:0">内</span><span style="font-size:12px;letter-spacing:1.5px;-webkit-text-stroke:0">径</span>X}</div>
<div class="a nw" style="left:227px;top:355px;width:72px;overflow:hidden;height:25px;line-height:27px;font-family:Liberation Mono;font-size:11.5px;-webkit-text-stroke:0.3px #000">{/d:v=<span style="font-size:12px;letter-spacing:1.5px;-webkit-text-stroke:0">内</span><span style="font-size:12px;letter-spacing:1.5px;-webkit-text-stroke:0">径</span>X}</div>
<div class="a nw" style="left:307px;top:355px;width:72px;overflow:hidden;height:25px;line-height:27px;font-family:Liberation Mono;font-size:11.5px;-webkit-text-stroke:0.3px #000">{/d:v=<span style="font-size:12px;letter-spacing:1.5px;-webkit-text-stroke:0">内</span><span style="font-size:12px;letter-spacing:1.5px;-webkit-text-stroke:0">径</span>X}</div>
<div class="a nw" style="left:387px;top:355px;width:72px;overflow:hidden;height:25px;line-height:27px;font-family:Liberation Mono;font-size:11.5px;-webkit-text-stroke:0.3px #000">{/d:v=<span style="font-size:12px;letter-spacing:1.5px;-webkit-text-stroke:0">内</span><span style="font-size:12px;letter-spacing:1.5px;-webkit-text-stroke:0">径</span>X}</div>
<div class="a nw" style="left:467px;top:355px;width:72px;overflow:hidden;height:25px;line-height:27px;font-family:Liberation Mono;font-size:11.5px;-webkit-text-stroke:0.3px #000">{/d:v=<span style="font-size:12px;letter-spacing:1.5px;-webkit-text-stroke:0">内</span><span style="font-size:12px;letter-spacing:1.5px;-webkit-text-stroke:0">径</span>X}</div>
<div class="a nw" style="left:547px;top:355px;width:72px;overflow:hidden;height:25px;line-height:27px;font-family:Liberation Mono;font-size:11.5px;-webkit-text-stroke:0.3px #000">{/d:v=<span style="font-size:12px;letter-spacing:1.5px;-webkit-text-stroke:0">内</span><span style="font-size:12px;letter-spacing:1.5px;-webkit-text-stroke:0">径</span>X}</div>
<div class="a nw" style="left:627px;top:355px;width:72px;overflow:hidden;height:25px;line-height:27px;font-family:Liberation Mono;font-size:11.5px;-webkit-text-stroke:0.3px #000">{/d:v=<span style="font-size:12px;letter-spacing:1.5px;-webkit-text-stroke:0">内</span><span style="font-size:12px;letter-spacing:1.5px;-webkit-text-stroke:0">径</span>X}</div>
<div class="a nw" style="left:707px;top:355px;width:72px;overflow:hidden;height:25px;line-height:27px;font-family:Liberation Mono;font-size:11.5px;-webkit-text-stroke:0.3px #000">{/d:v=<span style="font-size:12px;letter-spacing:1.5px;-webkit-text-stroke:0">内</span><span style="font-size:12px;letter-spacing:1.5px;-webkit-text-stroke:0">径</span>X}</div>
<div class="a nw" style="left:119px;top:382px;height:27px;line-height:27px;font-family:Liberation Mono;font-size:11.5px;-webkit-text-stroke:0.3px #000;font-weight:normal">{/d:v=<span style="font-size:12px;letter-spacing:1.5px;-webkit-text-stroke:0">内</span><span style="font-size:12px;letter-spacing:1.5px;-webkit-text-stroke:0">径</span>X}</div>
<div class="a nw" style="left:227px;top:382px;width:72px;overflow:hidden;height:25px;line-height:27px;font-family:Liberation Mono;font-size:11.5px;-webkit-text-stroke:0.3px #000">{/d:v=<span style="font-size:12px;letter-spacing:1.5px;-webkit-text-stroke:0">内</span><span style="font-size:12px;letter-spacing:1.5px;-webkit-text-stroke:0">径</span>X}</div>
<div class="a nw" style="left:307px;top:382px;width:72px;overflow:hidden;height:25px;line-height:27px;font-family:Liberation Mono;font-size:11.5px;-webkit-text-stroke:0.3px #000">{/d:v=<span style="font-size:12px;letter-spacing:1.5px;-webkit-text-stroke:0">内</span><span style="font-size:12px;letter-spacing:1.5px;-webkit-text-stroke:0">径</span>X}</div>
<div class="a nw" style="left:387px;top:382px;width:72px;overflow:hidden;height:25px;line-height:27px;font-family:Liberation Mono;font-size:11.5px;-webkit-text-stroke:0.3px #000">{/d:v=<span style="font-size:12px;letter-spacing:1.5px;-webkit-text-stroke:0">内</span><span style="font-size:12px;letter-spacing:1.5px;-webkit-text-stroke:0">径</span>X}</div>
<div class="a nw" style="left:467px;top:382px;width:72px;overflow:hidden;height:25px;line-height:27px;font-family:Liberation Mono;font-size:11.5px;-webkit-text-stroke:0.3px #000">{/d:v=<span style="font-size:12px;letter-spacing:1.5px;-webkit-text-stroke:0">内</span><span style="font-size:12px;letter-spacing:1.5px;-webkit-text-stroke:0">径</span>X}</div>
<div class="a nw" style="left:547px;top:382px;width:72px;overflow:hidden;height:25px;line-height:27px;font-family:Liberation Mono;font-size:11.5px;-webkit-text-stroke:0.3px #000">{/d:v=<span style="font-size:12px;letter-spacing:1.5px;-webkit-text-stroke:0">内</span><span style="font-size:12px;letter-spacing:1.5px;-webkit-text-stroke:0">径</span>X}</div>
<div class="a nw" style="left:627px;top:382px;width:72px;overflow:hidden;height:25px;line-height:27px;font-family:Liberation Mono;font-size:11.5px;-webkit-text-stroke:0.3px #000">{/d:v=<span style="font-size:12px;letter-spacing:1.5px;-webkit-text-stroke:0">内</span><span style="font-size:12px;letter-spacing:1.5px;-webkit-text-stroke:0">径</span>X}</div>
<div class="a nw" style="left:707px;top:382px;width:72px;overflow:hidden;height:25px;line-height:27px;font-family:Liberation Mono;font-size:11.5px;-webkit-text-stroke:0.3px #000">{/d:v=<span style="font-size:12px;letter-spacing:1.5px;-webkit-text-stroke:0">内</span><span style="font-size:12px;letter-spacing:1.5px;-webkit-text-stroke:0">径</span>X}</div>
<div class="a nw" style="left:119px;top:409px;height:27px;line-height:27px;font-family:Liberation Mono;font-size:11.5px;-webkit-text-stroke:0.3px #000;font-weight:normal">{/d:v=<span style="font-size:12px;letter-spacing:1.5px;-webkit-text-stroke:0">内</span><span style="font-size:12px;letter-spacing:1.5px;-webkit-text-stroke:0">径</span>X}</div>
<div class="a nw" style="left:227px;top:409px;width:72px;overflow:hidden;height:25px;line-height:27px;font-family:Liberation Mono;font-size:11.5px;-webkit-text-stroke:0.3px #000">{/d:v=<span style="font-size:12px;letter-spacing:1.5px;-webkit-text-stroke:0">内</span><span style="font-size:12px;letter-spacing:1.5px;-webkit-text-stroke:0">径</span>X}</div>
<div class="a nw" style="left:307px;top:409px;width:72px;overflow:hidden;height:25px;line-height:27px;font-family:Liberation Mono;font-size:11.5px;-webkit-text-stroke:0.3px #000">{/d:v=<span style="font-size:12px;letter-spacing:1.5px;-webkit-text-stroke:0">内</span><span style="font-size:12px;letter-spacing:1.5px;-webkit-text-stroke:0">径</span>X}</div>
<div class="a nw" style="left:387px;top:409px;width:72px;overflow:hidden;height:25px;line-height:27px;font-family:Liberation Mono;font-size:11.5px;-webkit-text-stroke:0.3px #000">{/d:v=<span style="font-size:12px;letter-spacing:1.5px;-webkit-text-stroke:0">内</span><span style="font-size:12px;letter-spacing:1.5px;-webkit-text-stroke:0">径</span>X}</div>
<div class="a nw" style="left:467px;top:409px;width:72px;overflow:hidden;height:25px;line-height:27px;font-family:Liberation Mono;font-size:11.5px;-webkit-text-stroke:0.3px #000">{/d:v=<span style="font-size:12px;letter-spacing:1.5px;-webkit-text-stroke:0">内</span><span style="font-size:12px;letter-spacing:1.5px;-webkit-text-stroke:0">径</span>X}</div>
<div class="a nw" style="left:547px;top:409px;width:72px;overflow:hidden;height:25px;line-height:27px;font-family:Liberation Mono;font-size:11.5px;-webkit-text-stroke:0.3px #000">{/d:v=<span style="font-size:12px;letter-spacing:1.5px;-webkit-text-stroke:0">内</span><span style="font-size:12px;letter-spacing:1.5px;-webkit-text-stroke:0">径</span>X}</div>
<div class="a nw" style="left:627px;top:409px;width:72px;overflow:hidden;height:25px;line-height:27px;font-family:Liberation Mono;font-size:11.5px;-webkit-text-stroke:0.3px #000">{/d:v=<span style="font-size:12px;letter-spacing:1.5px;-webkit-text-stroke:0">内</span><span style="font-size:12px;letter-spacing:1.5px;-webkit-text-stroke:0">径</span>X}</div>
<div class="a nw" style="left:707px;top:409px;width:72px;overflow:hidden;height:25px;line-height:27px;font-family:Liberation Mono;font-size:11.5px;-webkit-text-stroke:0.3px #000">{/d:v=<span style="font-size:12px;letter-spacing:1.5px;-webkit-text-stroke:0">内</span><span style="font-size:12px;letter-spacing:1.5px;-webkit-text-stroke:0">径</span>X}</div>
<div class="a nw" style="left:119px;top:436px;height:27px;line-height:27px;font-family:Liberation Mono;font-size:11.5px;-webkit-text-stroke:0.3px #000;font-weight:normal">{/d:v=<span style="font-size:12px;letter-spacing:1.5px;-webkit-text-stroke:0">内</span><span style="font-size:12px;letter-spacing:1.5px;-webkit-text-stroke:0">径</span>X}</div>
<div class="a nw" style="left:227px;top:436px;width:72px;overflow:hidden;height:25px;line-height:27px;font-family:Liberation Mono;font-size:11.5px;-webkit-text-stroke:0.3px #000">{/d:v=<span style="font-size:12px;letter-spacing:1.5px;-webkit-text-stroke:0">内</span><span style="font-size:12px;letter-spacing:1.5px;-webkit-text-stroke:0">径</span>X}</div>
<div class="a nw" style="left:307px;top:436px;width:72px;overflow:hidden;height:25px;line-height:27px;font-family:Liberation Mono;font-size:11.5px;-webkit-text-stroke:0.3px #000">{/d:v=<span style="font-size:12px;letter-spacing:1.5px;-webkit-text-stroke:0">内</span><span style="font-size:12px;letter-spacing:1.5px;-webkit-text-stroke:0">径</span>X}</div>
<div class="a nw" style="left:387px;top:436px;width:72px;overflow:hidden;height:25px;line-height:27px;font-family:Liberation Mono;font-size:11.5px;-webkit-text-stroke:0.3px #000">{/d:v=<span style="font-size:12px;letter-spacing:1.5px;-webkit-text-stroke:0">内</span><span style="font-size:12px;letter-spacing:1.5px;-webkit-text-stroke:0">径</span>X}</div>
<div class="a nw" style="left:467px;top:436px;width:72px;overflow:hidden;height:25px;line-height:27px;font-family:Liberation Mono;font-size:11.5px;-webkit-text-stroke:0.3px #000">{/d:v=<span style="font-size:12px;letter-spacing:1.5px;-webkit-text-stroke:0">内</span><span style="font-size:12px;letter-spacing:1.5px;-webkit-text-stroke:0">径</span>X}</div>
<div class="a nw" style="left:547px;top:436px;width:72px;overflow:hidden;height:25px;line-height:27px;font-family:Liberation Mono;font-size:11.5px;-webkit-text-stroke:0.3px #000">{/d:v=<span style="font-size:12px;letter-spacing:1.5px;-webkit-text-stroke:0">内</span><span style="font-size:12px;letter-spacing:1.5px;-webkit-text-stroke:0">径</span>X}</div>
<div class="a nw" style="left:627px;top:436px;width:72px;overflow:hidden;height:25px;line-height:27px;font-family:Liberation Mono;font-size:11.5px;-webkit-text-stroke:0.3px #000">{/d:v=<span style="font-size:12px;letter-spacing:1.5px;-webkit-text-stroke:0">内</span><span style="font-size:12px;letter-spacing:1.5px;-webkit-text-stroke:0">径</span>X}</div>
<div class="a nw" style="left:707px;top:436px;width:72px;overflow:hidden;height:25px;line-height:27px;font-family:Liberation Mono;font-size:11.5px;-webkit-text-stroke:0.3px #000">{/d:v=<span style="font-size:12px;letter-spacing:1.5px;-webkit-text-stroke:0">内</span><span style="font-size:12px;letter-spacing:1.5px;-webkit-text-stroke:0">径</span>X}</div>
<div class="a" style="left:910px;top:0px;width:15px;height:17px;background:#e8e8e8"></div>
<div class="a" style="left:910px;top:17px;width:15px;height:267px;background:#b4b4b4"></div>
<div class="a" style="left:910px;top:284px;width:15px;height:167px;background:#e8e8e8"></div>
<svg class="a" style="left:913px;top:5px" width="9" height="6" viewBox="0 0 9 6"><path d="M1 5 L4.5 1.5 L8 5" stroke="#222" stroke-width="1.8" fill="none"/></svg>
<svg class="a" style="left:913px;top:439px" width="9" height="6" viewBox="0 0 9 6"><path d="M1 1 L4.5 4.5 L8 1" stroke="#222" stroke-width="1.8" fill="none"/></svg>
</div>
<div class="a" style="left:1001px;top:213px;width:360px;height:427px;border:1px solid #6a6a6a;background:#fff"></div>
<div class="a" style="left:1060px;top:190px;width:55px;height:24px;border:1px solid #8a8a8a;border-bottom:none;background:#f5f5f5;text-align:center;line-height:23px;font-size:12px">参数</div>
<div class="a" style="left:1114px;top:190px;width:57px;height:24px;border:1px solid #8a8a8a;border-bottom:none;background:#f5f5f5;text-align:center;line-height:23px;font-size:12px">标签</div>
<div class="a" style="left:1170px;top:190px;width:57px;height:24px;border:1px solid #8a8a8a;border-bottom:none;background:#f5f5f5;text-align:center;line-height:23px;font-size:12px">变量</div>
<div class="a" style="left:1226px;top:190px;width:57px;height:24px;border:1px solid #8a8a8a;border-bottom:none;background:#f5f5f5;text-align:center;line-height:23px;font-size:12px">公式</div>
<div class="a" style="left:1001px;top:188px;width:60px;height:26px;border:1px solid #8a8a8a;border-bottom:none;background:#fff;color:#1e8ad6;font-size:12px;line-height:24px;padding-left:10px">单元格</div>
<div class="a" style="left:1320px;top:190px;width:21px;height:21px;background:#a9a9a9;border:1px solid #8a8a8a"></div>
<svg class="a" style="left:1327px;top:196px" width="6" height="9" viewBox="0 0 6 9"><path d="M5 0.5 V8.5 L1 4.5 Z" fill="#cfcfcf"/></svg>
<div class="a" style="left:1340px;top:190px;width:21px;height:21px;background:#fff;border:1px solid #8a8a8a"></div>
<svg class="a" style="left:1348px;top:196px" width="6" height="9" viewBox="0 0 6 9"><path d="M1 0.5 V8.5 L5 4.5 Z" fill="#111"/></svg>
<div class="a rp" style="left:1011px;top:234px;line-height:18px;color:#000;">字体名称：</div>
<div class="a box" style="left:1074px;top:230px;width:272px;height:26px"><div class="a nw" style="left:5px;top:1px;line-height:24px;font-size:12px">楷体</div><svg class="a" style="right:9px;top:10px" width="10" height="6" viewBox="0 0 10 6"><path d="M0 0.5 H10 L5 5.5 Z" fill="#111"/></svg></div>
<div class="a rp" style="left:1011px;top:268px;line-height:18px;color:#000;">字体颜色：</div>
<div class="a box" style="left:1074px;top:264px;width:89px;height:26px"></div>
<div class="a" style="left:1078px;top:268px;width:60px;height:18px;background:#000"></div>
<svg class="a" style="left:1144px;top:274px" width="11" height="7" viewBox="0 0 11 7"><path d="M0 0.5 H11 L5.5 6.5 Z" fill="#111"/></svg>
<div class="a rp" style="left:1176px;top:268px;line-height:18px;color:#000;">字体大小：</div>
<div class="a box" style="left:1238px;top:264px;width:48px;height:26px"><div class="a nw" style="left:3px;top:0;line-height:24px;font-size:12px;color:#000">12</div><svg class="a" style="right:8px;top:5px" width="8" height="15" viewBox="0 0 8 15"><path d="M0.5 5 L4 1 L7.5 5 Z M0.5 10 L4 14 L7.5 10 Z" fill="#222"/></svg></div>
<div class="a" style="left:1297px;top:264px;width:49px;height:26px;background:#e8791e;color:#fff;font-size:12px;line-height:25px;text-align:center">更多...</div>
<div class="a" style="left:1012px;top:298px;width:334px;height:1px;background:#c9d0dc"></div>
<div class="a rp" style="left:1012px;top:313px;line-height:18px;color:#000;">文本内容：</div>
<div class="a box" style="left:1074px;top:307px;width:272px;height:29px"></div>
<div class="a rp" style="left:1082px;top:313px;line-height:18px;color:#000;font-size:13px">{/a:v=项目}</div>
<div class="a rad" style="left:1158px;top:345px"></div>
<div class="a rp" style="left:1177px;top:343px;line-height:18px;color:#000;">上</div>
<div class="a chk" style="left:1013px;top:368px"></div>
<div class="a rp" style="left:1032px;top:366px;line-height:18px;color:#000;">控制跳转方向：</div>
<div class="a rad" style="left:1120px;top:368px"></div>
<div class="a rp" style="left:1139px;top:366px;line-height:18px;color:#000;">左</div>
<div class="a rad" style="left:1200px;top:368px"></div>
<div class="a rp" style="left:1218px;top:366px;line-height:18px;color:#000;">右</div>
<div class="a rp" style="left:1255px;top:366px;line-height:18px;color:#000;">大小：</div>
<div class="a box" style="left:1296px;top:362px;width:50px;height:26px"><div class="a nw" style="left:3px;top:0;line-height:24px;font-size:12px;color:#000">1</div><svg class="a" style="right:8px;top:5px" width="8" height="15" viewBox="0 0 8 15"><path d="M0.5 5 L4 1 L7.5 5 Z M0.5 10 L4 14 L7.5 10 Z" fill="#222"/></svg></div>
<div class="a rad" style="left:1158px;top:391px"></div>
<div class="a rp" style="left:1177px;top:389px;line-height:18px;color:#000;">下</div>
<div class="a rad" style="left:1120px;top:418px"></div>
<div class="a rp" style="left:1139px;top:416px;line-height:18px;color:#000;">自定义脚本：</div>
<div class="a rp" style="left:1218px;top:416px;line-height:18px;color:#1a6fe0;text-decoration:underline">脚本定义帮助</div>
<div class="a box" style="left:1119px;top:444px;width:227px;height:64px"></div>
<div class="a chk" style="left:1013px;top:519px"></div>
<div class="a rp" style="left:1031px;top:517px;line-height:18px;color:#000;">禁止手动修改数据</div>
<div class="a chk" style="left:1170px;top:519px"></div>
<div class="a rp" style="left:1188px;top:517px;line-height:18px;color:#000;">文字自动换行</div>
<div class="a chk" style="left:1013px;top:551px"></div>
<div class="a rp" style="left:1031px;top:549px;line-height:18px;color:#000;">内容隐藏不显示</div>
<div class="a chk" style="left:1170px;top:551px"></div>
<div class="a rp" style="left:1188px;top:549px;line-height:18px;color:#000;">限制小数位数：</div>
<div class="a box" style="left:1290px;top:543px;width:56px;height:26px"><div class="a nw" style="left:3px;top:0;line-height:24px;font-size:12px;color:#b0b0b0">3</div><svg class="a" style="right:8px;top:5px" width="8" height="15" viewBox="0 0 8 15"><path d="M0.5 5 L4 1 L7.5 5 Z M0.5 10 L4 14 L7.5 10 Z" fill="#222"/></svg></div>
<div class="a rp" style="left:1012px;top:582px;line-height:18px;color:#000;">文字水平对齐方式：</div>
<div class="a rad" style="left:1134px;top:583px"><div class="a" style="left:4px;top:4px;width:5px;height:5px;border-radius:50%;background:#555"></div></div>
<div class="a rp" style="left:1152px;top:581px;line-height:18px;color:#000;">靠左</div>
<div class="a rad" style="left:1198px;top:583px"></div>
<div class="a rp" style="left:1216px;top:581px;line-height:18px;color:#000;">居中</div>
<div class="a rad" style="left:1262px;top:583px"></div>
<div class="a rp" style="left:1280px;top:581px;line-height:18px;color:#000;">靠右</div>
<div class="a" style="left:1147px;top:607px;width:67px;height:26px;background:#2b72c9;border-radius:3px;color:#fff;font-size:13px;line-height:26px;text-align:center">应用</div>
<div class="a btn" style="left:91px;width:97px;background:#2b72c9">导入</div>
<div class="a btn" style="left:198px;width:97px;background:#2b72c9">导出</div>
<div class="a btn" style="left:305px;width:130px;background:#2b72c9">导入Excel文件...</div>
<div class="a btn" style="left:445px;width:97px;background:#2b72c9">预览效果...</div>
<div class="a nw" style="left:907px;top:663px;font-size:12px;line-height:18px;color:#333">行数=1&nbsp;&nbsp;&nbsp;列数=1</div>
<div class="a btn" style="left:1074px;width:97px;background:#23506f">保存</div>
<div class="a btn" style="left:1209px;width:97px;background:#dc1c2e">取消</div>
<svg class="a" style="left:17px;top:704px" width="20" height="18" viewBox="0 0 20 18"><circle cx="8" cy="6" r="4.5" fill="none" stroke="#fff" stroke-width="1.4"/><path d="M1 17 Q1.5 11 8 10.5 Q11 10.5 12.5 12" fill="none" stroke="#fff" stroke-width="1.4"/><path d="M15 10.2 L17.3 11.3 V14.2 L15 15.8 L12.7 14.2 V11.3 Z" fill="none" stroke="#fff" stroke-width="1.3"/><circle cx="15" cy="13" r="0.9" fill="#fff"/></svg>
<div class="a nw" style="left:40px;top:705px;line-height:18px;font-size:12px;color:#fff">系统管理员</div>
<div class="a" style="left:146px;top:708px;width:1px;height:11px;background:#fff"></div>
<svg class="a" style="left:179px;top:704px" width="18" height="18" viewBox="0 0 18 18"><circle cx="9" cy="9" r="7.5" fill="none" stroke="#fff" stroke-width="1.4"/><path d="M9 4.5 V9.5 H13" fill="none" stroke="#fff" stroke-width="1.4"/></svg>
<div class="a nw" style="left:206px;top:705px;line-height:18px;font-size:12px;color:#fff">操作时长：0小时18分钟</div>
<div class="a" style="left:381px;top:708px;width:1px;height:11px;background:#fff"></div>
<svg class="a" style="left:429px;top:704px" width="17" height="18" viewBox="0 0 17 18"><path d="M12 6 V2 H2 V16 H7" fill="none" stroke="#fff" stroke-width="1.4"/><path d="M4.5 6 H9.5 M4.5 9 H8.5 M4.5 12 H6.5" stroke="#fff" stroke-width="1.3"/><path d="M8.5 15.5 L14 10 L16 12 L10.5 17.5 H8.5 Z" fill="none" stroke="#fff" stroke-width="1.3"/></svg>
<div class="a nw" style="left:453px;top:705px;line-height:18px;font-size:12px;color:#fff">单机模式</div>
<div class="a nw" style="left:1243px;top:705px;line-height:18px;font-size:12px;color:#fff;font-size:13px">[ 旗舰版 ] Ver: 2.9.2</div>
</body></html>
